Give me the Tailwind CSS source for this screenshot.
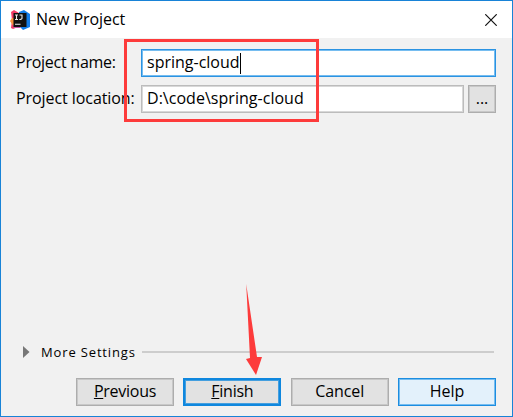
<!DOCTYPE html>
<html lang="en">
<head>
<meta charset="utf-8">
<title>New Project</title>
<script src="https://cdn.jsdelivr.net/npm/@tailwindcss/browser@4"></script>
</head>
<body class="bg-[#f1f1f1]">
<main class="relative flex h-[417px] w-[513px] flex-col overflow-hidden border border-[#1883d7] bg-[#f1f1f1] font-['Open_Sans','Noto_Sans',sans-serif] text-[16px] leading-[22px] text-black">
  <header class="flex h-[37px] shrink-0 items-center bg-white pl-[9px] pr-[15px]">
    <svg class="h-[20px] w-[20px] shrink-0" viewBox="0 0 20 20">
      <path d="M1 2L4 0L9 3L8 17L3 19L1 18L2 10Z" fill="#f33c66"/>
      <path d="M0 11L2 8L5 8L6 16L4 17Z" fill="#f9913d"/>
      <path d="M9 2L14 0L17 2L20 4V17L13 20L10 17Z" fill="#127ce8"/>
      <path d="M3 15L9 16L11 18L8 18L4 18Z" fill="#c655a8"/>
      <rect x="3.5" y="3" width="13" height="14" fill="#111"/>
      <path d="M5 5H8M6.5 5V9.5M5 9.5H8M9.5 5H12.5M12 5V8.3Q12 9.5 9.3 9.5M5 14.3H10.5" fill="none" stroke="#eee" stroke-width="1.1"/>
    </svg>
    <h1 class="mb-[1px] ml-[6px] whitespace-nowrap tracking-[-0.05px]">New Project</h1>
    <svg class="ml-auto h-[12px] w-[12px]" viewBox="0 0 12 12"><path d="M.3.3L11.7 11.7M11.7.3L.3 11.7" stroke="#111" stroke-width="1.2"/></svg>
  </header>
  <section class="flex flex-col gap-[8px] pl-[15px] pr-[16px] pt-[11px]">
    <div class="flex h-[28px] items-center">
      <label class="mb-[2px] w-[125px] shrink-0 whitespace-nowrap tracking-[-0.25px]">Project name:</label>
      <div class="flex h-[28px] flex-1 items-center border border-[#2b93e2] bg-white pl-[5px] inset-shadow-[0_0_0_1px_#76bdf0]"><span class="mb-[2px] whitespace-nowrap">spring-cloud</span><span class="h-[21px] w-px bg-black"></span></div>
    </div>
    <div class="flex h-[28px] items-center">
      <label class="mb-[2px] w-[125px] shrink-0 whitespace-nowrap tracking-[-0.07px]">Project location:</label>
      <div class="flex h-[28px] flex-1 items-center border border-[#bcbcbc] bg-white pl-[5px] inset-shadow-[0_0_0_1px_#d8d8d8]"><span class="mb-[2px] whitespace-nowrap tracking-[0.03px]">D:\code\spring-cloud</span></div>
      <button class="ml-[4px] h-[28px] w-[28px] border border-[#adadad] bg-[#e2e2e2] pb-[2px] leading-[22px] inset-shadow-[0_0_0_1px_#c8c8c8]">...</button>
    </div>
  </section>
  <div class="mt-auto flex h-[22px] items-center pl-[22px] pr-[18px]">
    <svg class="h-[12px] w-[7px]" viewBox="0 0 7 12"><path d="M0 0L6.5 6L0 12Z" fill="#777"/></svg>
    <span class="ml-[11px] w-[101px] whitespace-nowrap text-[13px] tracking-[0.85px]">More Settings</span>
    <div class="h-[2px] flex-1 bg-[#cdcdcd]"></div>
  </div>
  <footer class="mb-[10px] mt-[15px] flex justify-end gap-[9.33px] pr-[16px]">
    <button class="h-[28px] w-[98px] border border-[#adadad] bg-[#e2e2e2] pb-[2px] leading-[22px] tracking-[-0.25px] inset-shadow-[0_0_0_1px_#c8c8c8]"><u class="underline decoration-1 underline-offset-[1px]">P</u>revious</button>
    <button class="h-[28px] w-[98px] border-2 border-[#0f87de] bg-[#e2e2e2] pb-[2px] leading-[22px] tracking-[-0.25px] inset-shadow-[0_0_0_1px_#449fdf]"><u class="underline decoration-1 underline-offset-[1px]">F</u>inish</button>
    <button class="h-[28px] w-[98px] border border-[#adadad] bg-[#e2e2e2] pb-[2px] leading-[22px] tracking-[-0.1px] inset-shadow-[0_0_0_1px_#c8c8c8]">Cancel</button>
    <button class="h-[28px] w-[98px] border border-[#1c8de0] bg-[#e3f1fb] pb-[2px] leading-[22px] inset-shadow-[0_0_0_1px_#76bdf0]">Help</button>
  </footer>
  <div class="pointer-events-none absolute left-[123px] top-[38px] h-[83px] w-[195px] border-[3px] border-[#fd3b3b]"></div>
  <svg class="pointer-events-none absolute left-[244px] top-[283px] h-[92px] w-[20px]" viewBox="0 0 20 92"><path d="M1.2 0L12 73L17 73L11 91L1 75L5 74Z" fill="#fd3b3b"/></svg>
</main>
</body>
</html>
